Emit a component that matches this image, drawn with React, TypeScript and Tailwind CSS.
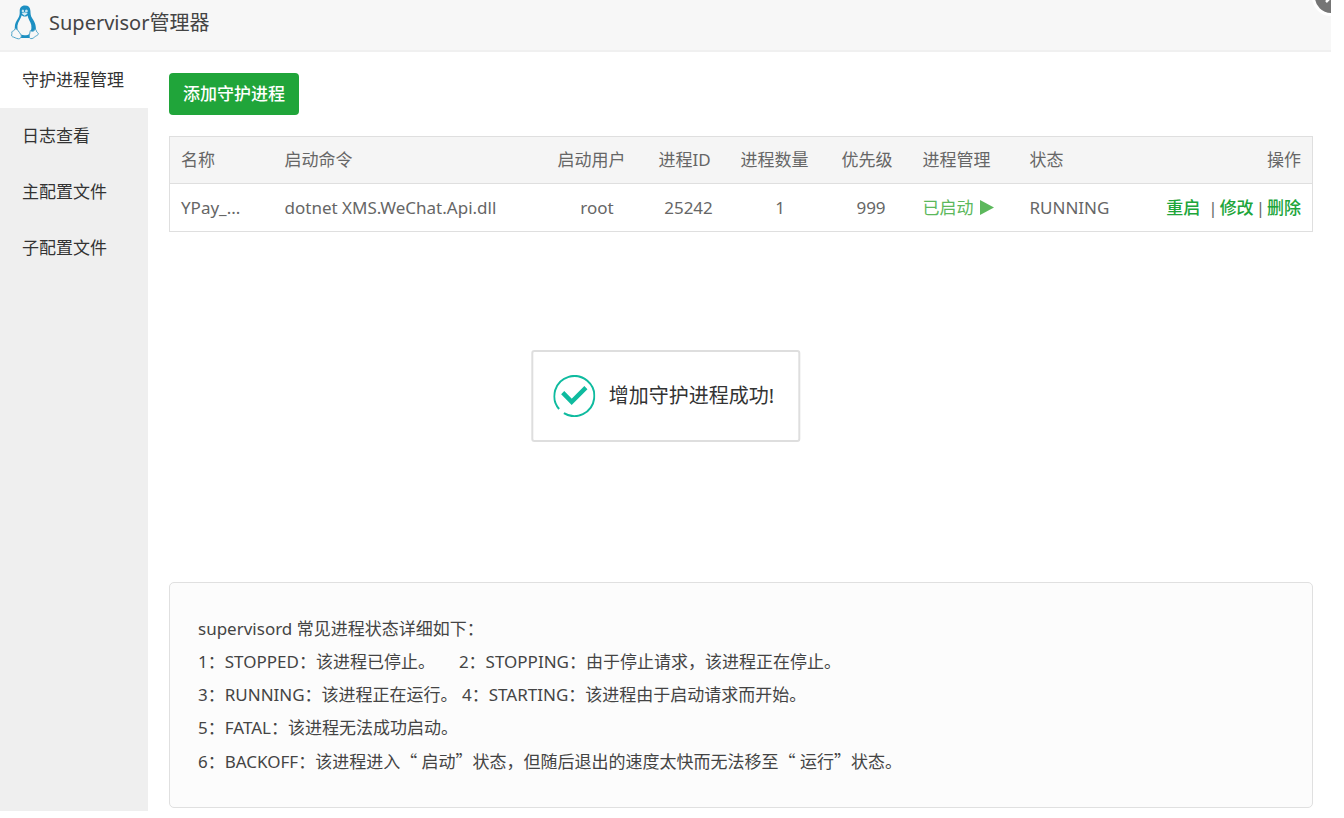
import { ReactNode } from "react";

interface IProcess {
  name: string;
  command: string;
  user: string;
  pid: number;
  count: number;
  priority: number;
  status: string;
}

const menuItems = ["守护进程管理", "日志查看", "主配置文件", "子配置文件"];

const processes: IProcess[] = [
  {
    name: "YPay_WeChat",
    command: "dotnet XMS.WeChat.Api.dll",
    user: "root",
    pid: 25242,
    count: 1,
    priority: 999,
    status: "RUNNING",
  },
];

const columns = [
  { title: "名称", width: "w-[104px]" },
  { title: "启动命令", width: "w-[273px]" },
  { title: "启动用户", width: "w-[101px]" },
  { title: "进程ID", width: "w-[82px]" },
  { title: "进程数量", width: "w-[101px]" },
  { title: "优先级", width: "w-[81px]" },
  { title: "进程管理", width: "w-[107px]" },
  { title: "状态", width: "w-[116px]" },
];

const TuxLogo = () => (
  <svg viewBox="0 0 28 35" className="h-[35px] w-7" aria-hidden="true">
    <path
      d="M14 0.4C10.2 0.4 8.6 2.9 8.7 6C8.8 9.4 8.6 11 7 13.4C5 16.4 3.8 19 3.8 22.4L3.6 27L7 33H21L24.8 27C25.4 20.8 24 17.1 21.2 13.2C19.5 10.8 19.6 9 19.4 5.7C19.2 2.3 17.4 0.4 14 0.4Z"
      fill="#1c8fc2"
    />
    <path
      d="M10.6 10.2C10.2 12.6 8.6 14.9 7.2 17.8C5.6 21.6 6.4 25.8 8.6 28.8C10.2 30.8 17.2 30.8 18.8 28.4C20.8 25 21 20.6 19.4 17.4C18.2 14.8 17 13 16.6 10.4C15 12 12.4 12 10.6 10.2Z"
      fill="#f7f7f7"
    />
    <ellipse cx="11.9" cy="6" rx="1.2" ry="1.5" fill="#c4e1ee" />
    <ellipse cx="15.4" cy="6" rx="1.4" ry="1.6" fill="#c4e1ee" />
    <path d="M10.6 8.4L13.6 7.2L16.8 8.4L13.6 10.8Z" fill="#d9edf5" />
    <path
      d="M4.4 23.6C6.4 23.8 8.1 27.2 9.8 29.5C11 31.6 9.8 33.9 7.4 33.8C5.2 33.6 3 32 1.4 31.7C-0.2 31.2 1.3 29.1 0.8 26.9C1.2 25.8 3.2 26.4 4.4 23.6Z"
      fill="#f7f7f7"
      stroke="#4da3c8"
      strokeWidth="1"
    />
    <path
      d="M19.3 25.5C20.6 26.8 23.2 26.6 24.2 24.1C25.8 24.5 24.8 26.8 26.8 27.9C28.4 29.2 26.4 30.2 24.7 31.2C22.9 32.3 21.8 34.1 19.6 33.6C17.4 33 18.7 29 19.3 25.5Z"
      fill="#f7f7f7"
      stroke="#4da3c8"
      strokeWidth="1"
    />
  </svg>
);

const SuccessIcon = () => (
  <svg
    viewBox="0 0 42 42"
    className="size-[42px]"
    fill="none"
    stroke="#0fbb9f"
    aria-hidden="true"
  >
    <path d="M5.8 34A20 20 0 1 1 10.6 38.1" strokeWidth="2" />
    <path d="M9.4 17.6L18.4 26.8L32.6 12.6" strokeWidth="4.4" />
  </svg>
);

const Cjk = ({ children }: { children: ReactNode }) => (
  <span className="font-['Noto_Sans_CJK_SC',sans-serif]">{children}</span>
);

const ProcessTable = () => (
  <table className="w-full table-fixed border border-[#dfdfdf] text-left text-[#666]">
    <thead className="bg-[#f5f5f5]">
      <tr className="h-[47px] border-b border-[#dfdfdf]">
        {columns.map(({ title, width }) => (
          <th key={title} className={`${width} px-[11px] font-normal`}>
            {title}
          </th>
        ))}
        <th className="px-[11px] text-right font-normal">操作</th>
      </tr>
    </thead>
    <tbody>
      {processes.map((item) => (
        <tr key={item.pid} className="h-12">
          <td className="px-[11px]">{item.name.slice(0, 5)}...</td>
          <td className="px-[11px]">{item.command}</td>
          <td className="px-[11px] text-center">{item.user}</td>
          <td className="px-[11px] text-center">{item.pid}</td>
          <td className="px-[11px] text-center">{item.count}</td>
          <td className="px-[11px] text-center">{item.priority}</td>
          <td className="px-[11px]">
            <button className="flex items-center gap-[6px] whitespace-nowrap text-[#5cb85c]">
              已启动
              <svg viewBox="0 0 14 15" className="h-[15px] w-[14px]" aria-hidden="true">
                <path d="M0 0L14 7.5L0 15Z" fill="currentColor" />
              </svg>
            </button>
          </td>
          <td className="px-[11px]">{item.status}</td>
          <td className="px-[11px]">
            <div className="flex justify-end gap-0.5 whitespace-nowrap">
              <a href="#restart" className="mr-[6px] font-medium text-[#20a53a]">
                重启
              </a>
              |
              <a href="#edit" className="font-medium text-[#20a53a]">
                修改
              </a>
              |
              <a href="#delete" className="font-medium text-[#20a53a]">
                删除
              </a>
            </div>
          </td>
        </tr>
      ))}
    </tbody>
  </table>
);

const StatusHelp = () => (
  <div className="rounded-[5px] border border-[#e0e0e0] bg-[#fcfcfc] px-7 py-[29px] leading-[33px] text-[#444]">
    <p>supervisord 常见进程状态详细如下：</p>
    <p>
      <span className="mr-6">1：STOPPED：该进程已停止。</span>
      2：STOPPING：由于停止请求，该进程正在停止。
    </p>
    <p>3：RUNNING：该进程正在运行。 4：STARTING：该进程由于启动请求而开始。</p>
    <p>5：FATAL：该进程无法成功启动。</p>
    <p>
      6：BACKOFF：该进程进入<Cjk>“</Cjk> 启动<Cjk>”</Cjk>
      状态，但随后退出的速度太快而无法移至<Cjk>“</Cjk> 运行<Cjk>”</Cjk>状态。
    </p>
  </div>
);

const App = () => {
  return (
    <div
      lang="zh-CN"
      className="relative mr-[13px] overflow-hidden bg-white font-['Noto_Sans','Noto_Sans_CJK_SC',sans-serif] text-[17px] leading-6"
    >
      <header className="flex h-[52px] items-start gap-[10px] border-b-2 border-[#f0f0f0] bg-[#f7f7f7] pt-[5px] pl-[11px]">
        <TuxLogo />
        <h1 className="pt-1 text-[20px] leading-7 text-[#444]">
          Supervisor管理器
        </h1>
      </header>
      <button
        aria-label="关闭"
        className="absolute -top-[22px] -right-[19px] flex size-[38px] items-center justify-center rounded-full border-3 border-white bg-[#757575] text-white"
      >
        <svg viewBox="0 0 12 12" className="size-3" aria-hidden="true">
          <path d="M1 1L11 11M11 1L1 11" stroke="currentColor" strokeWidth="2.5" />
        </svg>
      </button>

      <div className="flex">
        <nav className="w-[148px] shrink-0 bg-[#efefef] text-[#333]">
          {menuItems.map((item, index) => (
            <button
              key={item}
              className={`block h-14 w-full pl-[22px] text-left ${
                index === 0 ? "bg-white" : ""
              }`}
            >
              {item}
            </button>
          ))}
        </nav>

        <main className="min-w-0 flex-1 pt-[21px] pr-[18px] pb-[3px] pl-[21px]">
          <button className="mb-[21px] block h-[42px] rounded-[4px] bg-[#20a53a] px-[14px] font-medium text-white">
            添加守护进程
          </button>
          <div className="min-h-[446px]">
            <ProcessTable />
          </div>
          <StatusHelp />
        </main>
      </div>

      <div
        role="status"
        className="absolute top-[350px] left-1/2 flex h-[92px] -translate-x-1/2 items-center gap-[14px] rounded-[3px] border-2 border-[#dedede] bg-white pr-6 pl-5 text-[20px] whitespace-nowrap text-[#333]"
      >
        <SuccessIcon />
        增加守护进程成功!
      </div>
    </div>
  );
};

export default App;
